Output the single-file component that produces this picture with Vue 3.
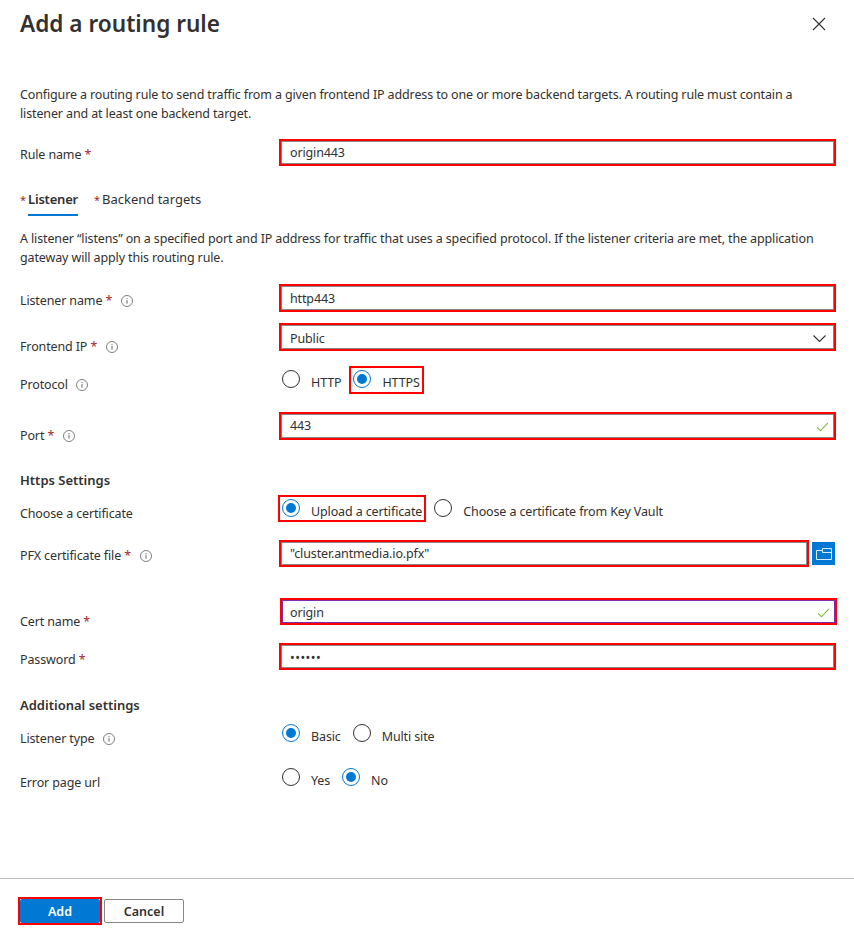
<script setup>
const infoPath = "M6 11.5A5.5 5.5 0 1 1 6 .5a5.5 5.5 0 0 1 0 11z";
</script>

<template>
    <section class="panel">
        <header class="panel-head">
            <h1 class="title">Add a routing rule</h1>
            <button type="button" class="close" aria-label="Close">
                <svg width="14" height="14" viewBox="0 0 14 14">
                    <path d="M1 1l12 12M13 1L1 13" stroke="#323130" stroke-width="1.1" fill="none" />
                </svg>
            </button>
        </header>

        <p class="intro">
            Configure a routing rule to send traffic from a given frontend IP address to one or more backend targets. A routing rule must contain a listener and at least one backend target.
        </p>

        <div class="row row-rule">
            <label class="label lb-6">Rule name <span class="req">*</span></label>
            <div class="mark field"><input class="input" value="origin443" readonly /></div>
        </div>

        <nav class="tabs">
            <div class="tab active"><span class="tab-req">*</span><span class="tab-text">Listener</span></div>
            <div class="tab"><span class="tab-req">*</span><span class="tab-text">Backend targets</span></div>
        </nav>

        <p class="intro intro-listener">
            A listener “listens” on a specified port and IP address for traffic that uses a specified protocol. If the listener criteria are met, the application gateway will apply this routing rule.
        </p>

        <div class="row row-listener">
            <label class="label lb-7">Listener name <span class="req">*</span>
                <svg class="info" viewBox="0 0 12 12"><path :d="infoPath" /><path class="i" d="M6 5.2v3.4M6 3.2v1" /></svg>
            </label>
            <div class="mark field"><input class="input" value="http443" readonly /></div>
        </div>

        <div class="row row-frontend">
            <label class="label lb-14">Frontend IP <span class="req">*</span>
                <svg class="info" viewBox="0 0 12 12"><path :d="infoPath" /><path class="i" d="M6 5.2v3.4M6 3.2v1" /></svg>
            </label>
            <div class="mark field">
                <input class="input input-low" value="Public" readonly />
                <svg class="chevron" width="13" height="7" viewBox="0 0 13 7">
                    <path d="M.5.5l6 6 6-6" stroke="#323130" stroke-width="1.1" fill="none" />
                </svg>
            </div>
        </div>

        <div class="row row-protocol">
            <label class="label lb-9">Protocol
                <svg class="info" viewBox="0 0 12 12"><path :d="infoPath" /><path class="i" d="M6 5.2v3.4M6 3.2v1" /></svg>
            </label>
            <div class="radios">
                <div class="option"><span class="radio"></span><span class="opt-text">HTTP</span></div>
                <div class="option marked"><span class="radio on"></span><span class="opt-text">HTTPS</span></div>
            </div>
        </div>

        <div class="row row-port">
            <label class="label lb-14">Port <span class="req">*</span>
                <svg class="info" viewBox="0 0 12 12"><path :d="infoPath" /><path class="i" d="M6 5.2v3.4M6 3.2v1" /></svg>
            </label>
            <div class="mark field">
                <input class="input input-high" value="443" readonly />
                <svg class="check" width="13" height="10" viewBox="0 0 15 12">
                    <path d="M1 6.5l4 4L14 1" stroke="#7fba3a" stroke-width="1.3" fill="none" />
                </svg>
            </div>
        </div>

        <h2 class="heading heading-https">Https Settings</h2>

        <div class="row row-cert">
            <label class="label lb-9">Choose a certificate</label>
            <div class="radios">
                <div class="option marked"><span class="radio on"></span><span class="opt-text">Upload a certificate</span></div>
                <div class="option"><span class="radio"></span><span class="opt-text">Choose a certificate from Key Vault</span></div>
            </div>
        </div>

        <div class="row row-pfx">
            <label class="label lb-6">PFX certificate file <span class="req">*</span>
                <svg class="info" viewBox="0 0 12 12"><path :d="infoPath" /><path class="i" d="M6 5.2v3.4M6 3.2v1" /></svg>
            </label>
            <div class="pfx">
                <div class="mark field"><input class="input" value="&quot;cluster.antmedia.io.pfx&quot;" readonly /></div>
                <button type="button" class="browse" aria-label="Browse">
                    <svg width="16" height="12" viewBox="0 0 16 12">
                        <path d="M.5 2.5h6v-2h9v11H.5zM6.5 2.5v2h9" stroke="#fff" stroke-width="1" fill="none" opacity=".85" />
                    </svg>
                </button>
            </div>
        </div>

        <div class="row row-certname">
            <label class="label lb-14">Cert name <span class="req">*</span></label>
            <div class="mark field valid">
                <input class="input input-low" value="origin" readonly />
                <svg class="check" width="13" height="10" viewBox="0 0 15 12">
                    <path d="M1 6.5l4 4L14 1" stroke="#7fba3a" stroke-width="1.3" fill="none" />
                </svg>
            </div>
        </div>

        <div class="row row-password">
            <label class="label lb-7">Password <span class="req">*</span></label>
            <div class="mark field"><input class="input input-low dots" type="password" value="secret" readonly /></div>
        </div>

        <h2 class="heading heading-additional">Additional settings</h2>

        <div class="row row-type">
            <label class="label lb-9">Listener type
                <svg class="info" viewBox="0 0 12 12"><path :d="infoPath" /><path class="i" d="M6 5.2v3.4M6 3.2v1" /></svg>
            </label>
            <div class="radios">
                <div class="option"><span class="radio on"></span><span class="opt-text">Basic</span></div>
                <div class="option"><span class="radio"></span><span class="opt-text">Multi site</span></div>
            </div>
        </div>

        <div class="row row-error">
            <label class="label lb-9">Error page url</label>
            <div class="radios">
                <div class="option"><span class="radio"></span><span class="opt-text">Yes</span></div>
                <div class="option"><span class="radio on"></span><span class="opt-text">No</span></div>
            </div>
        </div>

        <footer class="panel-foot">
            <div class="mark add-mark"><button type="button" class="btn btn-primary">Add</button></div>
            <button type="button" class="btn btn-cancel">Cancel</button>
        </footer>
    </section>
</template>

<style scoped>
.panel {
    width: 854px;
    height: 940px;
    display: flex;
    flex-direction: column;
    box-sizing: border-box;
    background: #fff;
    color: #323130;
    font-family: "Noto Sans", "Open Sans", sans-serif;
    font-size: 12.5px;
    letter-spacing: -0.13px;
    overflow: hidden;
}

.panel-head {
    height: 48px;
    flex: none;
    display: flex;
    align-items: center;
    justify-content: space-between;
    padding: 0 28px 0 20px;
}

.title {
    margin: 0 0 1px;
    font-size: 22.6px;
    font-weight: 600;
    letter-spacing: 0;
    line-height: 45px;
}

.close {
    display: flex;
    padding: 0;
    border: 0;
    background: none;
}

.intro {
    margin: 37px 18px 0 20px;
    line-height: 19px;
    height: 38px;
}

.intro-listener {
    margin-top: 13px;
}

.row {
    flex: none;
    display: grid;
    grid-template-columns: 258px minmax(0, 1fr);
    grid-template-rows: 100%;
    padding: 0 18px 0 20px;
    height: 28px;
}

.row-rule { margin-top: 16px; height: 27px; }
.row-listener { margin-top: 17px; }
.row-frontend { margin-top: 11px; }
.row-protocol { margin-top: 15px; }
.row-port { margin-top: 18px; }
.row-cert { margin-top: 5px; height: 27px; }
.row-pfx { margin-top: 18px; height: 27px; }
.row-certname { margin-top: 31px; height: 27px; }
.row-password { margin-top: 18px; height: 27px; }
.row-type { margin-top: 5px; }
.row-error { margin-top: 16px; }

.label {
    display: block;
    line-height: 19px;
    white-space: nowrap;
}

.lb-6 { padding-top: 6px; }
.lb-7 { padding-top: 7px; }
.lb-9 { padding-top: 9px; }
.lb-14 { padding-top: 14px; }

.req {
    color: #a4262c;
}

.info {
    display: inline-block;
    vertical-align: -2px;
    width: 12px;
    height: 12px;
    margin-left: 5px;
}

.req + .info {
    margin-left: 9px;
}

.info path {
    fill: none;
    stroke: #605e5c;
    stroke-width: 0.8;
}

.info .i {
    stroke-width: 1;
}

.mark {
    position: relative;
    box-sizing: border-box;
    border: 2px solid #f00;
}

.field {
    margin-left: 1px;
    height: 100%;
}

.input {
    display: block;
    width: 100%;
    height: 100%;
    box-sizing: border-box;
    border: 1px solid #8a8886;
    padding: 0 8px;
    margin: 0;
    outline: none;
    background: #fff;
    color: #323130;
    font: inherit;
    letter-spacing: inherit;
}

.input-low {
    padding-top: 2px;
}

.input-high {
    padding-bottom: 2px;
}

.dots {
    letter-spacing: 0.5px;
}

.valid {
    margin-left: 2px;
    margin-right: -1px;
}

.valid .input {
    padding-left: 7px;
    border-color: #7b2fb0;
}

.chevron {
    position: absolute;
    top: 10px;
    right: 8px;
}

.check {
    position: absolute;
    top: 8px;
    right: 5px;
}

.tabs {
    flex: none;
    display: flex;
    gap: 16px;
    margin: 18px 0 0 20px;
    height: 32px;
    font-size: 13px;
    letter-spacing: 0;
}

.tab {
    display: flex;
}

.tab-req {
    width: 8px;
    font-size: 11px;
    color: #a4262c;
    line-height: 31px;
}

.tab-text {
    height: 32px;
    line-height: 31px;
    box-sizing: border-box;
}

.active .tab-text {
    font-weight: 600;
    letter-spacing: -0.2px;
    border-bottom: 2px solid #0078d4;
}

.heading {
    flex: none;
    margin: 0 0 0 20px;
    height: 20px;
    font-size: 13px;
    font-weight: 600;
    letter-spacing: 0;
    line-height: 20px;
}

.heading-https { margin-top: 30px; }
.heading-additional { margin-top: 25px; }

.radios {
    display: flex;
    gap: 4px;
}

.option {
    display: flex;
    gap: 11px;
    box-sizing: border-box;
    height: 100%;
    padding: 2px;
    border: 2px solid transparent;
}

.marked {
    border-color: #f00;
}

.radio {
    width: 18px;
    height: 18px;
    flex: none;
    box-sizing: border-box;
    display: flex;
    align-items: center;
    justify-content: center;
    border: 1px solid #323130;
    border-radius: 50%;
}

.radio.on {
    border-color: #0078d4;
}

.radio.on::after {
    content: "";
    width: 10px;
    height: 10px;
    border-radius: 50%;
    background: #0078d4;
}

.opt-text {
    line-height: 18px;
    padding-top: 4px;
    white-space: nowrap;
}

.pfx {
    display: flex;
    gap: 3px;
    height: 100%;
    margin-right: 1px;
}

.pfx .field {
    flex: 1;
}

.browse {
    display: flex;
    align-items: center;
    justify-content: center;
    width: 23px;
    height: 23px;
    margin-top: 2px;
    flex: none;
    padding: 0;
    border: 0;
    background: #0078d4;
}

.panel-foot {
    flex: none;
    margin-top: auto;
    height: 62px;
    box-sizing: border-box;
    border-top: 1px solid #bdbdbd;
    padding: 18px 0 0 18px;
    display: flex;
    gap: 2px;
}

.add-mark {
    height: 28px;
    width: 84px;
}

.btn {
    font: inherit;
    font-weight: 600;
    letter-spacing: 0;
    border-radius: 2px;
    padding: 0;
    box-sizing: border-box;
}

.btn-primary {
    width: 100%;
    height: 100%;
    display: block;
    border: 0;
    color: #fff;
    background: #0078d4;
}

.btn-cancel {
    width: 80px;
    height: 24px;
    margin-top: 2px;
    border: 1px solid #8a8886;
    background: #fff;
    color: #323130;
}
</style>
